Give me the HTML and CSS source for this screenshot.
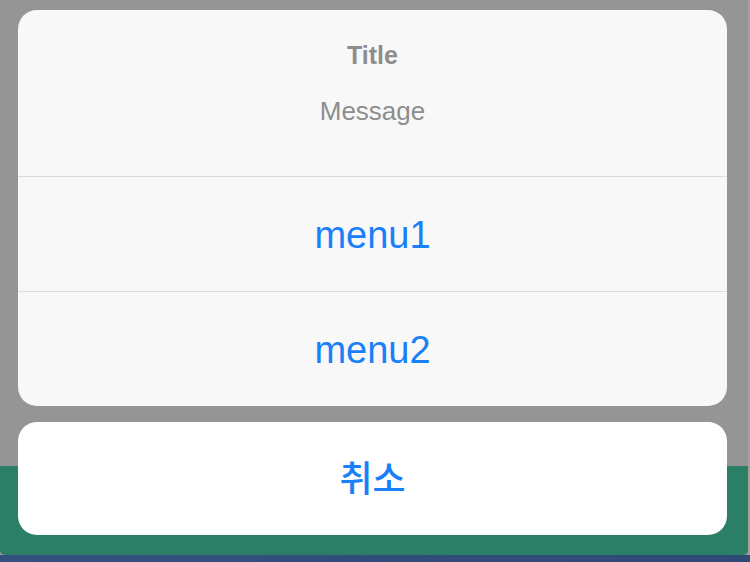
FILE: index.html
```html
<!DOCTYPE html>
<html lang="ko">
<head>
<meta charset="utf-8">
<title>Action Sheet</title>
<link rel="stylesheet" href="styles.css">
</head>
<body>
<div class="screen">
  <div class="underlay">
    <div class="dim"></div>
    <div class="bar"></div>
    <div class="floor"></div>
  </div>
  <div class="sheet">
    <div class="group">
      <div class="header">
        <div class="title">Title</div>
        <div class="message">Message</div>
      </div>
      <div class="action">menu1</div>
      <div class="action">menu2</div>
    </div>
    <div class="cancel">취소</div>
  </div>
</div>
</body>
</html>
```

FILE: styles.css
```css
html, body {
  margin: 0;
  padding: 0;
}
body {
  width: 750px;
  height: 562px;
  overflow: hidden;
  font-family: "Liberation Sans", "Noto Sans CJK KR", sans-serif;
  background: #34507e;
}
.screen {
  position: relative;
  width: 750px;
  height: 562px;
}
.underlay {
  display: flex;
  flex-direction: column;
  height: 100%;
  background: linear-gradient(to right, #959595 748px, #a2a2a2 748px);
}
.dim {
  height: 466px;
}
.bar {
  height: 89px;
  width: 748px;
  background: #2b7f67;
  border-radius: 0 0 5px 5px;
}
.floor {
  flex: 1;
  background: linear-gradient(to right, #34507e, #2f4a74);
}
.sheet {
  position: absolute;
  left: 18px;
  top: 10px;
  width: 709px;
  display: flex;
  flex-direction: column;
  gap: 16px;
}
.group {
  background: #f8f8f8;
  border-radius: 19px;
  overflow: hidden;
  display: flex;
  flex-direction: column;
}
.header {
  height: 166px;
  box-sizing: border-box;
  padding-top: 30px;
  display: flex;
  flex-direction: column;
  align-items: center;
  color: #8d8d8d;
}
.title {
  font-size: 25px;
  font-weight: bold;
  line-height: 30px;
}
.message {
  font-size: 26px;
  line-height: 30px;
  margin-top: 26px;
}
.action {
  height: 115px;
  border-top: 1px solid #dcdcdc;
  display: flex;
  align-items: center;
  justify-content: center;
  font-size: 38px;
  padding-top: 2px;
  box-sizing: border-box;
  color: #1a80f8;
}
.cancel {
  height: 113px;
  box-sizing: border-box;
  padding-bottom: 5px;
  background: #ffffff;
  border-radius: 19px;
  display: flex;
  align-items: center;
  justify-content: center;
  font-family: "Noto Sans CJK KR", sans-serif;
  font-size: 36px;
  font-weight: 500;
  line-height: 1;
  color: #1a80f8;
}
```
